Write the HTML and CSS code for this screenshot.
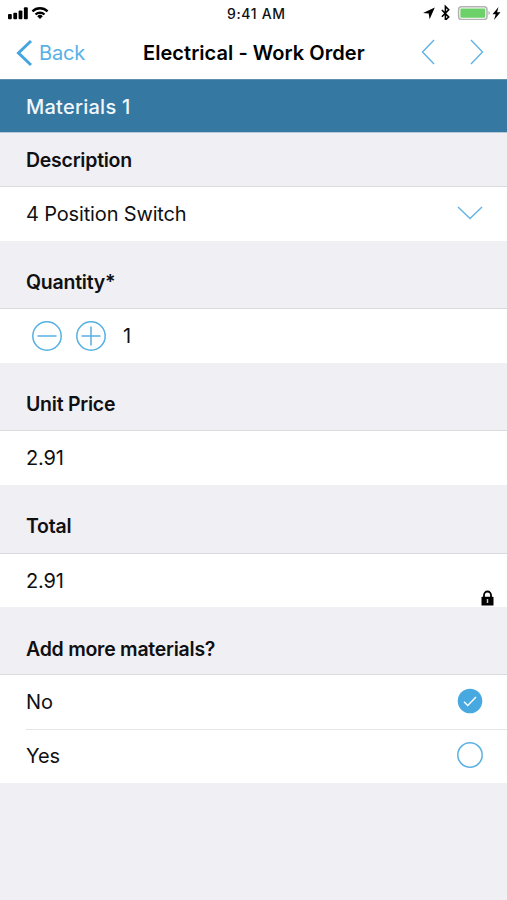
FILE: index.html
```
<!DOCTYPE html>
<html lang="en">
<head>
<meta charset="utf-8">
<meta name="viewport" content="width=device-width, initial-scale=1">
<title>Electrical - Work Order</title>
<link rel="stylesheet" href="styles.css">
</head>
<body>
<header class="top">
  <div class="status">
    <svg class="status-left" width="44" height="20" viewBox="0 0 44 20">
      <rect x="0" y="14" width="3.8" height="5.3" rx="1"/><rect x="5.3" y="12.7" width="3.8" height="6.6" rx="1"/><rect x="10.6" y="10.4" width="3.8" height="8.9" rx="1"/><rect x="15.9" y="7.3" width="3.900" height="12" rx="1"/>
      <g fill="none" stroke="#000" stroke-width="2.3"><path d="M24.4 11.3a11 11 0 0 1 15.2 0"/><path d="M27.5 14.5a6.6 6.6 0 0 1 9 0"/></g>
      <path d="M32 19l-2.8-2.8a4 4 0 0 1 5.6 0z"/>
    </svg>
    <span class="time">9:41 AM</span>
    <svg class="status-right" width="80" height="20" viewBox="0 0 80 20">
      <path d="M11.800 7.500L6.600 19.300 5.700 13.600 0 13z"/>
      <path d="M18.900 10l6.800 7-3.300 3V6.500l3.300 3.300-6.800 7" fill="none" stroke="#000" stroke-width="1.600"/>
      <rect x="35.600" y="6.700" width="28.400" height="12.800" rx="3" fill="#fff" stroke="#b1b3b1" stroke-width="1.500"/>
      <rect x="37.400" y="8.500" width="24.800" height="9.200" rx="1" fill="#6bd168"/>
      <path d="M65.500 11v4a2.200 2.200 0 0 0 0-4" fill="#aaa"/>
      <path d="M75.500 7l-6 7.300h3.200L71 20l6.500-7.800h-3.400z"/>
    </svg>
  </div>
  <nav class="nav">
    <a class="back"><svg width="18" height="28" viewBox="0 0 18 28"><path d="M15 2L2.500 14l12.500 12"/></svg><span>Back</span></a>
    <h1 class="title">Electrical - Work Order</h1>
    <div class="arrows">
      <svg width="14" height="26" viewBox="0 0 14 26"><path d="M13 1L1.500 13 13 25"/></svg>
      <svg width="14" height="26" viewBox="0 0 14 26"><path d="M1 1l11.500 12L1 25"/></svg>
    </div>
  </nav>
</header>
<main>
  <h2 class="banner">Materials 1</h2>
  <h3 class="label first">Description</h3>
  <div class="row"><span>4 Position Switch</span>
    <svg class="chevron" width="26" height="14" viewBox="0 0 26 14"><path d="M1 1l12 11.500L25 1"/></svg></div>
  <h3 class="label">Quantity*</h3>
  <div class="row stepper">
    <svg width="30" height="30" viewBox="0 0 30 30"><circle cx="15" cy="15" r="14.200"/><path d="M5.500 15h19"/></svg>
    <svg width="30" height="30" viewBox="0 0 30 30"><circle cx="15" cy="15" r="14.200"/><path d="M5.500 15h19M15 5.500v19"/></svg>
    <span>1</span>
  </div>
  <h3 class="label">Unit Price</h3>
  <div class="row"><span>2.91</span></div>
  <h3 class="label total">Total</h3>
  <div class="row locked"><span>2.91</span>
    <svg class="lock" width="13" height="16" viewBox="0 0 13 16"><path d="M3 8V5a3.500 3.500 0 0 1 7 0v3" fill="none" stroke="#000" stroke-width="1.800"/><rect x=".5" y="6.800" width="12" height="8.700" rx=".6"/><path d="M6.500 9v4" stroke="#ccc" stroke-width="1.500"/></svg></div>
  <h3 class="label more">Add more materials?</h3>
  <div class="row"><span>No</span>
    <svg class="radio" width="26" height="26" viewBox="0 0 26 26"><circle cx="13" cy="13" r="12.300" fill="#48a9e1"/><path d="M7 13.800l3.700 3.700L19 9" fill="none" stroke="#fff" stroke-width="1.400"/></svg></div>
  <div class="row divided"><span>Yes</span>
    <svg class="radio" width="26" height="26" viewBox="0 0 26 26"><circle cx="13" cy="13" r="12.200" fill="none" stroke="#5cb1e3" stroke-width="1.500"/></svg></div>
</main>
</body>
</html>
```
FILE: styles.css
```
* { box-sizing: border-box; }
body { margin: 0; min-height: 900px; background: #efeff4; color: #101012; font: 400 20px/28px Inter, sans-serif; }
h1, h2, h3 { margin: 0; font-size: 20px; font-weight: 600; }
svg { display: block; flex: none; }
span, h1 { white-space: nowrap; }
.top { height: 79px; background: #fff; }
.status { height: 27px; display: grid; grid-template-columns: 219px 1fr auto; padding: 0 4px 0 8px; }
.time { font-size: 14px; font-weight: 500; line-height: 27px; letter-spacing: .65px; }
.nav { height: 51px; display: grid; grid-template-columns: 143px 1fr auto; align-items: center; padding: 0 23px 0 0; }
.back { display: flex; align-items: center; gap: 5px; padding-left: 16px; color: #58b1e6; letter-spacing: -.2px; }
.back svg { fill: none; stroke: #45a5e0; stroke-width: 3; }
.title { color: #000; letter-spacing: .05px; }
.arrows { display: flex; gap: 35px; margin-top: -2px; }
.arrows svg, .chevron { fill: none; stroke: #5fb3e5; stroke-width: 1.4; }
.chevron { margin-top: -2px; }
.banner { height: 54px; display: flex; align-items: center; padding: 1px 0 0 26px; background: #3579a3; border-bottom: 1px solid #b5c9d8; border-top: 1px solid #5d8fac; color: #f1f7fb; font-weight: 500; letter-spacing: .25px; }
.label { height: 68px; padding: 27px 26px 0; border-bottom: 1px solid #d9d9de; font-size: 19.5px; letter-spacing: -.25px; }
.label.first { height: 54px; padding-top: 13px; }
.label.total { height: 69px; }
.label.more { padding-top: 28px; }
.row { height: 54px; display: flex; align-items: center; justify-content: space-between; padding: 0 24px 0 26px; background: #fff; letter-spacing: -.15px; }
.row.locked { height: 53px; }
.stepper { justify-content: flex-start; gap: 14px; padding-left: 32px; }
.stepper svg { fill: none; stroke: #55b0e3; stroke-width: 1.5; }
.stepper span { padding-left: 3px; }
.lock { align-self: flex-end; margin: 0 -11px 1px 0; }
.radio { margin-top: -2px; }
.divided { background: linear-gradient(#e6e6ea, #e6e6ea) 26px 0 / 100% 1px no-repeat #fff; }
```
